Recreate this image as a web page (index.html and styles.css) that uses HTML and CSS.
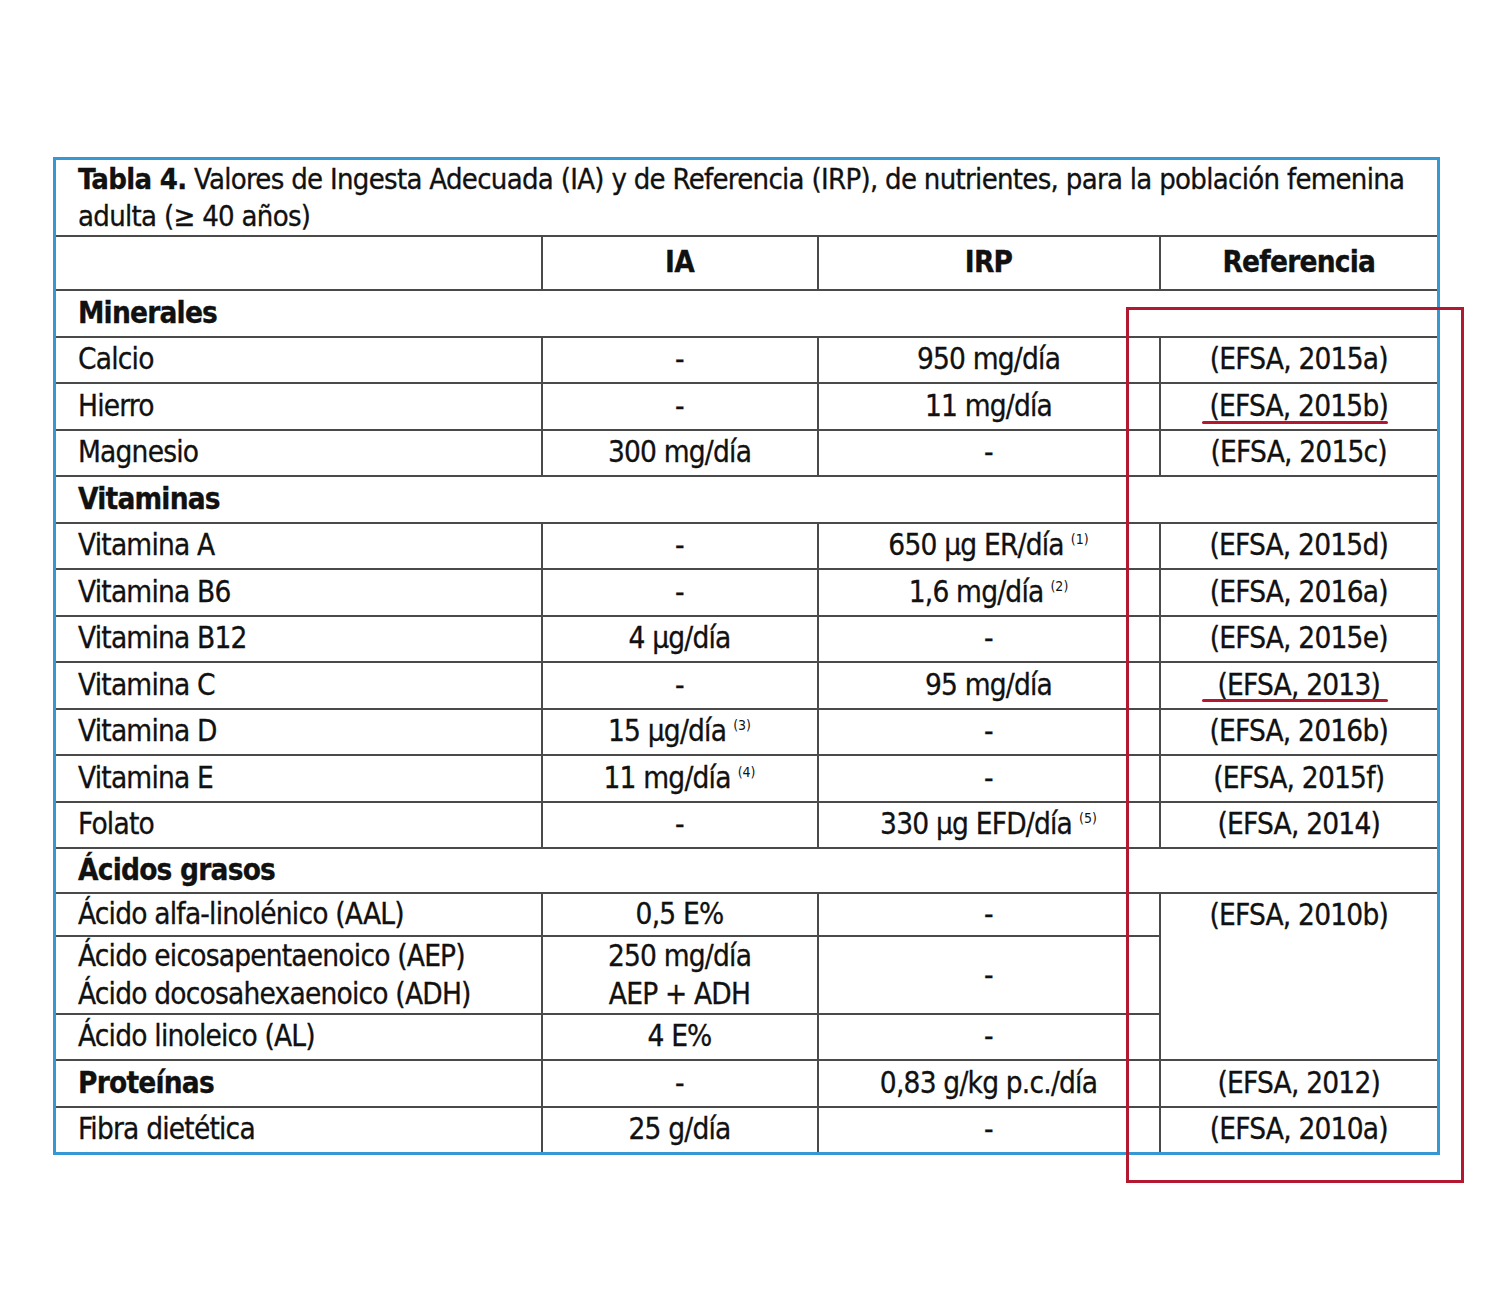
FILE: index.html
```html
<!DOCTYPE html>
<html lang="es">
<head>
<meta charset="utf-8">
<title>Tabla 4</title>
<link rel="stylesheet" href="styles.css">
</head>
<body>
<div class="sheet">
  <table class="tbl">
    <colgroup>
      <col class="c1"><col class="c2"><col class="c3"><col class="c4">
    </colgroup>
    <tr class="r-title"><td colspan="4" class="title"><b>Tabla 4.</b> Valores de Ingesta Adecuada (IA) y de Referencia (IRP), de nutrientes, para la población femenina<br>adulta (≥ 40 años)</td></tr>
    <tr class="r-head"><td></td><th>IA</th><th>IRP</th><th>Referencia</th></tr>
    <tr class="r"><td colspan="4" class="sec">Minerales</td></tr>
    <tr class="r"><td class="name">Calcio</td><td>-</td><td>950 mg/día</td><td>(EFSA, 2015a)</td></tr>
    <tr class="r"><td class="name">Hierro</td><td>-</td><td>11 mg/día</td><td>(EFSA, 2015b)</td></tr>
    <tr class="r"><td class="name">Magnesio</td><td>300 mg/día</td><td>-</td><td>(EFSA, 2015c)</td></tr>
    <tr class="r"><td colspan="4" class="sec">Vitaminas</td></tr>
    <tr class="r"><td class="name">Vitamina A</td><td>-</td><td>650 µg ER/día<span class="sup">(1)</span></td><td>(EFSA, 2015d)</td></tr>
    <tr class="r"><td class="name">Vitamina B6</td><td>-</td><td>1,6 mg/día<span class="sup">(2)</span></td><td>(EFSA, 2016a)</td></tr>
    <tr class="r"><td class="name">Vitamina B12</td><td>4 µg/día</td><td>-</td><td>(EFSA, 2015e)</td></tr>
    <tr class="r"><td class="name">Vitamina C</td><td>-</td><td>95 mg/día</td><td>(EFSA, 2013)</td></tr>
    <tr class="r"><td class="name">Vitamina D</td><td>15 µg/día<span class="sup">(3)</span></td><td>-</td><td>(EFSA, 2016b)</td></tr>
    <tr class="r"><td class="name">Vitamina E</td><td>11 mg/día<span class="sup">(4)</span></td><td>-</td><td>(EFSA, 2015f)</td></tr>
    <tr class="r"><td class="name">Folato</td><td>-</td><td>330 µg EFD/día<span class="sup">(5)</span></td><td>(EFSA, 2014)</td></tr>
    <tr class="r-acid"><td colspan="4" class="sec">Ácidos grasos</td></tr>
    <tr class="r-short"><td class="name">Ácido alfa-linolénico (AAL)</td><td>0,5 E%</td><td>-</td><td rowspan="3" class="top">(EFSA, 2010b)</td></tr>
    <tr class="r-tall"><td class="name">Ácido eicosapentaenoico (AEP)<br>Ácido docosahexaenoico (ADH)</td><td>250 mg/día<br>AEP + ADH</td><td>-</td></tr>
    <tr class="r-al"><td class="name">Ácido linoleico (AL)</td><td>4 E%</td><td>-</td></tr>
    <tr class="r-prot"><td class="name bold">Proteínas</td><td>-</td><td>0,83 g/kg p.c./día</td><td>(EFSA, 2012)</td></tr>
    <tr class="r-al"><td class="name">Fibra dietética</td><td>25 g/día</td><td>-</td><td>(EFSA, 2010a)</td></tr>
  </table>
  <div class="mark-box"></div>
  <div class="mark-line line-1"></div>
  <div class="mark-line line-2"></div>
</div>
</body>
</html>
```
FILE: styles.css
```css
html, body {
  margin: 0;
  padding: 0;
  background: #ffffff;
}

body {
  font-family: "DejaVu Sans Condensed", "Liberation Sans", sans-serif;
  color: #111111;
}

.sheet {
  position: relative;
  width: 1480px;
  height: 1300px;
  padding-top: 157px;
  padding-left: 53px;
  box-sizing: border-box;
}

.tbl {
  border-collapse: collapse;
  table-layout: fixed;
  width: 1384px;
  border: 3px solid #3597d3;
  font-size: 29.5px;
  letter-spacing: -0.8px;
  line-height: 1;
  -webkit-text-stroke: 0.3px #111111;
}

.c1 { width: 487px; }
.c2 { width: 276px; }
.c3 { width: 342px; }
.c4 { width: 279px; }

.tbl td,
.tbl th {
  border: 2px solid #4a4a4a;
  padding: 0 6px;
  text-align: center;
  vertical-align: middle;
  font-weight: normal;
  white-space: nowrap;
}

.tbl th {
  font-weight: bold;
}

.r-title td {
  height: 71px;
  text-align: left;
  padding: 1px 20px 0 22px;
  line-height: 37px;
}

.tbl td.title {
  font-size: 29px;
  letter-spacing: -0.7px;
  text-align: left;
}

.r-head td,
.r-head th {
  height: 52px;
}

.r td {
  height: 44.5px;
}

.r-acid td {
  height: 43px;
}

.r-short td {
  height: 41px;
}

.r-tall td {
  height: 76px;
  line-height: 38px;
}

.r-al td {
  height: 44px;
}

.r-prot td {
  height: 45px;
}

.tbl td.name {
  text-align: left;
  padding-left: 22px;
}

.tbl td.sec {
  text-align: left;
  padding-left: 22px;
  font-weight: bold;
}

.tbl td.bold {
  font-weight: bold;
}

.tbl td.top {
  vertical-align: top;
  padding-top: 7px;
}

.sup {
  font-size: 14px;
  vertical-align: 11px;
  margin-left: 7px;
  letter-spacing: 0;
  -webkit-text-stroke: 0;
}

.mark-box {
  position: absolute;
  left: 1126px;
  top: 307px;
  width: 338px;
  height: 876px;
  border: 3px solid #b2182f;
  box-sizing: border-box;
}

.mark-line {
  position: absolute;
  left: 1202px;
  width: 186px;
  height: 3px;
  background: #b2182f;
  border-radius: 2px;
}

.line-1 { top: 421px; }
.line-2 { top: 699px; }
```
